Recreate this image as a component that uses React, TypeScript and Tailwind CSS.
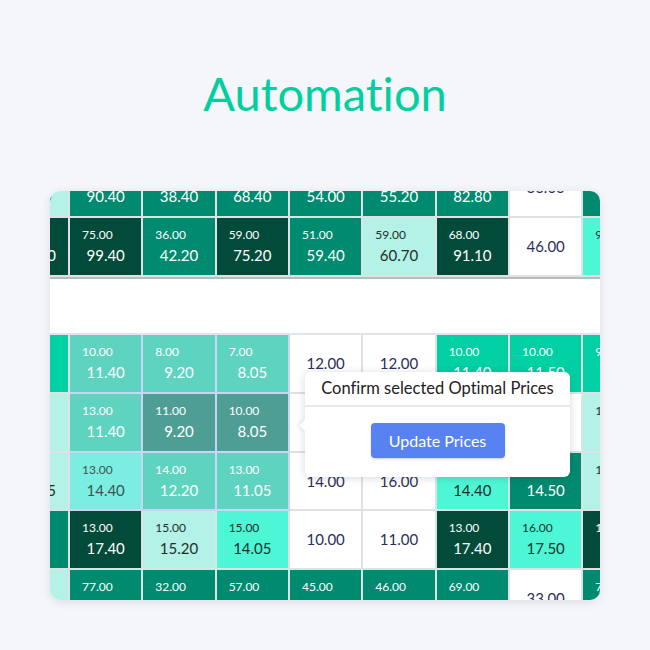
import React from 'react';

type Tone = 'D' | 'M' | 'L' | 'W' | 'B' | 'S' | 'SD' | 'LA' | 'A';

interface Cell {
  tone: Tone;
  small?: string;
  big: string;
  sel?: boolean;
}

const toneClass: Record<Tone, string> = {
  D: 'bg-[#024a39] text-white',
  M: 'bg-[#008a6f] text-white',
  L: 'bg-[#b4f1e6] text-[#1d302c]',
  W: 'bg-white text-[#2c2e57]',
  B: 'bg-[#00d0a3] text-white',
  S: 'bg-[#5ed3c0] text-white',
  SD: 'bg-[#4f9e95] text-white',
  LA: 'bg-[#7ceee1] text-[#3a5552]',
  A: 'bg-[#4df6d5] text-[#1d302c]',
};

const c = (tone: Tone, small: string | undefined, big: string, sel = false): Cell => ({ tone, small, big, sel });

const rowsTop: Cell[][] = [
  [
    c('L', '71.00', '88.20'),
    c('M', '70.00', '90.40'),
    c('M', '31.00', '38.40'),
    c('M', '55.00', '68.40'),
    c('M', '46.00', '54.00'),
    c('M', '48.00', '55.20'),
    c('M', '66.00', '82.80'),
    c('W', undefined, '36.00'),
    c('M', '70.00', '88.10'),
  ],
  [
    c('D', '84.00', '101.30'),
    c('D', '75.00', '99.40'),
    c('M', '36.00', '42.20'),
    c('D', '59.00', '75.20'),
    c('M', '51.00', '59.40'),
    c('L', '59.00', '60.70'),
    c('D', '68.00', '91.10'),
    c('W', undefined, '46.00'),
    c('A', '92.00', '98.30'),
  ],
];

const rowsBottom: Cell[][] = [
  [
    c('B', '8.00', '9.40'),
    c('S', '10.00', '11.40', true),
    c('S', '8.00', '9.20', true),
    c('S', '7.00', '8.05', true),
    c('W', undefined, '12.00'),
    c('W', undefined, '12.00'),
    c('B', '10.00', '11.40'),
    c('B', '10.00', '11.50'),
    c('B', '9.00', '10.40'),
  ],
  [
    c('L', '8.00', '9.10'),
    c('S', '13.00', '11.40', true),
    c('SD', '11.00', '9.20', true),
    c('SD', '10.00', '8.05', true),
    c('W', undefined, '13.00'),
    c('W', undefined, '15.00'),
    c('L', '12.00', '13.40'),
    c('W', undefined, '13.00'),
    c('L', '12.00', '13.50'),
  ],
  [
    c('L', '13.00', '101.35'),
    c('LA', '13.00', '14.40', true),
    c('S', '14.00', '12.20', true),
    c('S', '13.00', '11.05', true),
    c('W', undefined, '14.00'),
    c('W', undefined, '16.00'),
    c('A', '13.00', '14.40'),
    c('M', '13.00', '14.50'),
    c('L', '14.00', '15.40'),
  ],
  [
    c('M', '8.00', '9.40'),
    c('D', '13.00', '17.40'),
    c('L', '15.00', '15.20'),
    c('A', '15.00', '14.05'),
    c('W', undefined, '10.00'),
    c('W', undefined, '11.00'),
    c('D', '13.00', '17.40'),
    c('A', '16.00', '17.50'),
    c('D', '15.00', '18.40'),
  ],
  [
    c('L', '7.00', '8.10'),
    c('M', '77.00', '88.40'),
    c('M', '32.00', '38.20'),
    c('M', '57.00', '66.05'),
    c('M', '45.00', '52.00'),
    c('M', '46.00', '53.00'),
    c('M', '69.00', '80.40'),
    c('W', undefined, '33.00'),
    c('M', '72.00', '84.50'),
  ],
];

function PriceCell({ cell }: { cell: Cell }) {
  const border = cell.sel ? 'border-[#c9d5f2]' : 'border-[#dfe2e5]';
  if (cell.small === undefined) {
    return (
      <div className={`h-[58.67px] border-r-2 border-b-2 ${border} ${toneClass[cell.tone]} flex items-center justify-center text-[15px]`}>
        {cell.big}
      </div>
    );
  }
  return (
    <div className={`h-[58.67px] border-r-2 border-b-2 ${border} ${toneClass[cell.tone]} flex flex-col pt-[9px]`}>
      <div className="pl-[12px] text-[12px] leading-[16px] whitespace-nowrap">{cell.small}</div>
      <div className="mt-[2px] text-center text-[15px] leading-[20px] whitespace-nowrap">{cell.big}</div>
    </div>
  );
}

export default function App() {
  return (
    <div
      className="w-[650px] h-[650px] bg-[#f5f6fa] flex flex-col items-center overflow-hidden"
      style={{ fontFamily: 'Lato, "Noto Sans", sans-serif' }}
    >
      <h1 className="pt-[70px] text-[47px] leading-none text-[#00cf9f] font-normal [font-variant-ligatures:none]">
        Automation
      </h1>

      <div className="relative mt-[74px] w-[550px] h-[409px] rounded-[10px] bg-white overflow-hidden shadow-[0_2px_10px_rgba(40,50,80,0.12)]">
        <div className="-ml-[53.33px] -mt-[31.67px] grid grid-cols-[repeat(9,73.33px)]">
          {rowsTop.map((row, i) =>
            row.map((cell, j) => <PriceCell key={`t${i}-${j}`} cell={cell} />),
          )}
          <div className="col-span-9 h-[58.67px] bg-white border-t-2 border-b-2 border-t-[#b9bcbf] border-b-[#e2e5e8]" />
          {rowsBottom.map((row, i) =>
            row.map((cell, j) => <PriceCell key={`b${i}-${j}`} cell={cell} />),
          )}
        </div>

        {/* confirm popover */}
        <div className="absolute left-[255px] top-[181px] w-[265px] h-[105px] rounded-[6px] bg-white shadow-[0_1px_8px_rgba(30,40,60,0.18)]">
          <div className="absolute -left-[4px] top-[49px] w-[9px] h-[9px] rotate-45 bg-white shadow-[-2px_2px_3px_rgba(30,40,60,0.08)]" />
          <div className="relative h-[35px] flex items-center justify-center border-b-2 border-[#e6e8eb] text-[16.5px] text-[#1f2123] bg-white rounded-t-[6px] whitespace-nowrap [font-variant-ligatures:none]">
            Confirm selected Optimal Prices
          </div>
          <div className="flex justify-center pt-[16px]">
            <button
              type="button"
              className="w-[134px] h-[35px] rounded-[4px] bg-[#5882f2] text-white text-[16px] shadow-[0_1px_2px_rgba(40,60,140,0.25)]"
            >
              Update Prices
            </button>
          </div>
        </div>
      </div>
    </div>
  );
}
